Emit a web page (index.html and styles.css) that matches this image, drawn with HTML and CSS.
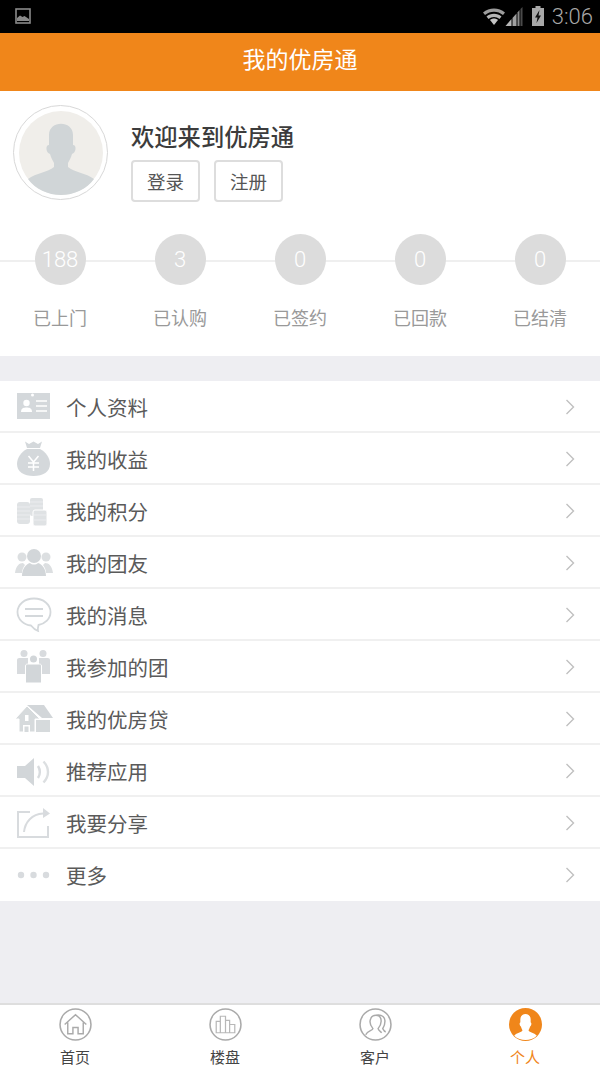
FILE: index.html
```html
<!DOCTYPE html>
<html lang="zh-CN">
<head>
    <meta charset="UTF-8">
    <meta name="viewport" content="width=device-width, initial-scale=1.0">
    <title>我的优房通</title>
    <link rel="stylesheet" href="styles.css">
</head>
<body>
    <div class="statusbar">
        <svg class="status-pic" width="16" height="16" viewBox="0 0 16 16">
            <rect x="1" y="1" width="14" height="14" fill="none" stroke="#8a8a8a" stroke-width="1.600"/>
            <path d="M2 13V10l3-2.500 2.500 1.500 2-1 4.500 3v2z" fill="#8a8a8a"/>
        </svg>
        <div class="status-right">
            <svg width="24" height="19" viewBox="0 0 23 19">
                <path d="M0.500 5.500C6.500 0 16.500 0 22.500 5.500L20.500 8C15.500 3.500 7.500 3.500 2.500 8z" fill="#9c9c9c"/>
                <path d="M4 9.500C8 5.800 15 5.800 19 9.500L17 12C14 9.300 9 9.300 6 12z" fill="#b5b5b5"/>
                <path d="M7.500 13C9.800 11 13.200 11 15.500 13L11.500 18z" fill="#c4c4c4"/>
            </svg>
            <svg class="status-signal" width="19" height="19" viewBox="0 0 18 19">
                <path d="M0 19L6 12V19z" fill="#b5b5b5"/>
                <path d="M7 11L11 6.500V19H7z" fill="#a0a0a0"/>
                <path d="M12 5.500L14 3V19H12z" fill="#8a8a8a"/>
                <path d="M15 2L17 0V19H15z" fill="#4a4a4a"/>
            </svg>
            <svg class="status-battery" width="14" height="20" viewBox="0 0 12 20">
                <path d="M3.500 0H8.500V2H12V20H0V2H3.500z" fill="#a8a8a8"/>
                <path d="M7.500 4L3 11.500H5.500L4.500 17 9 9.500H6.500z" fill="#111"/>
            </svg>
            <span class="status-time">3:06</span>
        </div>
    </div>

    <div class="titlebar">我的优房通</div>

    <div class="profile">
        <div class="avatar">
            <svg width="90" height="90" viewBox="0 0 90 90">
                <circle cx="45" cy="45" r="42" fill="#f0eeea"/>
                <path d="M33 27C33 12 57 12 57 27V37C61 37 60 45 56 46 55 50 53 53 52 55V59C58 64 70 65 78 71 71 81 58 87 45 87 32 87 19 81 12 71 20 65 32 64 38 59V55C37 53 35 50 34 46 30 45 29 37 33 37z" fill="#d0d5d7"/>
            </svg>
        </div>
        <div class="profile-body">
            <div class="welcome">欢迎来到优房通</div>
            <div class="profile-actions">
                <button>登录</button>
                <button>注册</button>
            </div>
        </div>
    </div>

    <div class="stats">
        <div class="stat"><div class="stat-num">188</div><div class="stat-label">已上门</div></div>
        <div class="stat"><div class="stat-num">3</div><div class="stat-label">已认购</div></div>
        <div class="stat"><div class="stat-num">0</div><div class="stat-label">已签约</div></div>
        <div class="stat"><div class="stat-num">0</div><div class="stat-label">已回款</div></div>
        <div class="stat"><div class="stat-num">0</div><div class="stat-label">已结清</div></div>
    </div>

    <div class="menu">
        <div class="row">
            <svg class="row-icon icon-card" width="36" height="36" viewBox="0 0 36 36">
                <rect x="1" y="5" width="33" height="26" fill="#d4d8db"/>
                <circle cx="16.500" cy="7" r="1.500" fill="#fff"/>
                <circle cx="10.500" cy="15" r="3.200" fill="#fff"/>
                <path d="M5 24C5 20 8 19.500 10.500 19.500S16 20 16 24z" fill="#fff"/>
                <path d="M20 13H31M20 18H31M20 23H31" stroke="#fff" stroke-width="1.500"/>
            </svg>
            <span class="row-text">个人资料</span>
            <svg class="chevron" width="10" height="16" viewBox="0 0 10 16"><path d="M1.500 1L8.500 8 1.500 15" fill="none" stroke="#c0c0c0" stroke-width="1.400"/></svg>
        </div>
        <div class="row">
            <svg class="row-icon" width="36" height="36" viewBox="0 0 36 36">
                <path d="M9 0.500L13 3 17.500 0.500 22 3 26 0.500 24 7H11z" fill="#d4d8db"/>
                <path d="M11 8H24C30 11 34 17 34 23 34 31 27 35 17.500 35S1 31 1 23C1 17 5 11 11 8z" fill="#d4d8db"/>
                <path d="M12.500 15L17.500 21 22.500 15M17.500 21V30M12 22H23M12 26H23" fill="none" stroke="#fff" stroke-width="1.500"/>
            </svg>
            <span class="row-text">我的收益</span>
            <svg class="chevron" width="10" height="16" viewBox="0 0 10 16"><path d="M1.500 1L8.500 8 1.500 15" fill="none" stroke="#c0c0c0" stroke-width="1.400"/></svg>
        </div>
        <div class="row">
            <svg class="row-icon icon-coins" width="36" height="36" viewBox="0 0 36 36">
                <rect x="1" y="7" width="13" height="22" rx="3" fill="#dfe2e4"/>
                <rect x="14" y="3" width="13" height="18" rx="2" fill="#dfe2e4"/>
                <rect x="17" y="15" width="14" height="16" rx="2" fill="#dfe2e4" stroke="#fff" stroke-width="1"/>
                <path d="M1 12H14M1 16H14M1 20H14M1 24H14M14 7H27M14 11H27M17 20H31M17 25H31" stroke="#eef0f1" stroke-width="0.800"/>
            </svg>
            <span class="row-text">我的积分</span>
            <svg class="chevron" width="10" height="16" viewBox="0 0 10 16"><path d="M1.500 1L8.500 8 1.500 15" fill="none" stroke="#c0c0c0" stroke-width="1.400"/></svg>
        </div>
        <div class="row">
            <svg class="row-icon" width="38" height="30" viewBox="0 0 38 30">
                <circle cx="7" cy="9" r="4.500" fill="#dcdfe1"/>
                <circle cx="31" cy="9" r="4.500" fill="#dcdfe1"/>
                <path d="M0 25C1 18 4 15 8 15L10 17C8 20 7 22 7 25z" fill="#dcdfe1"/>
                <path d="M38 25C37 18 34 15 30 15L28 17C30 20 31 22 31 25z" fill="#dcdfe1"/>
                <circle cx="19" cy="8" r="7" fill="#d2d6d9"/>
                <path d="M7 28C7 21 11 16 15 15 17 17 21 17 23 15 27 16 31 21 31 28z" fill="#d2d6d9"/>
            </svg>
            <span class="row-text">我的团友</span>
            <svg class="chevron" width="10" height="16" viewBox="0 0 10 16"><path d="M1.500 1L8.500 8 1.500 15" fill="none" stroke="#c0c0c0" stroke-width="1.400"/></svg>
        </div>
        <div class="row">
            <svg class="row-icon" width="36" height="36" viewBox="0 0 36 36">
                <path d="M18 1.500C8.500 1.500 1.500 7.500 1.500 15S8 28 15 28.500C17 31 19 33 22 34 21.500 32 22 30 22.500 28C29 26.500 34.500 22 34.500 15 34.500 7.500 27.500 1.500 18 1.500z" fill="none" stroke="#d4d8db" stroke-width="1.800"/>
                <path d="M9 12H27M9 19H27" stroke="#d4d8db" stroke-width="1.800"/>
            </svg>
            <span class="row-text">我的消息</span>
            <svg class="chevron" width="10" height="16" viewBox="0 0 10 16"><path d="M1.500 1L8.500 8 1.500 15" fill="none" stroke="#c0c0c0" stroke-width="1.400"/></svg>
        </div>
        <div class="row">
            <svg class="row-icon" width="36" height="36" viewBox="0 0 36 36">
                <circle cx="8" cy="4.500" r="3.500" fill="#d8dbde"/>
                <circle cx="27" cy="4.500" r="3.500" fill="#d8dbde"/>
                <path d="M1 11C1 9 3 9 5 9H12V25H1zM23 9H30C32 9 34 9 34 11V25H23z" fill="#d8dbde"/>
                <circle cx="17.500" cy="10" r="3.500" fill="#d2d6d9"/>
                <path d="M9.500 17C9.500 15 11 15 13 15H22C24 15 25.500 15 25.500 17V34H9.500z" fill="#d2d6d9" stroke="#fff" stroke-width="1"/>
            </svg>
            <span class="row-text">我参加的团</span>
            <svg class="chevron" width="10" height="16" viewBox="0 0 10 16"><path d="M1.500 1L8.500 8 1.500 15" fill="none" stroke="#c0c0c0" stroke-width="1.400"/></svg>
        </div>
        <div class="row">
            <svg class="row-icon" width="38" height="28" viewBox="0 0 38 28">
                <path d="M12 0H29L38 13H27z" fill="#d2d6d9"/>
                <path d="M21 15H35V27H21z" fill="#d6dadc"/>
                <path d="M0 14L12 1 25 14H20V27H4V14z" fill="#d6dadc" stroke="#fff" stroke-width="1"/>
                <rect x="8" y="20" width="7" height="7" fill="#fff"/>
                <rect x="9.500" y="21.500" width="4" height="5.500" fill="#d6dadc"/>
                <rect x="10" y="10" width="3.500" height="6" fill="#fff"/>
            </svg>
            <span class="row-text">我的优房贷</span>
            <svg class="chevron" width="10" height="16" viewBox="0 0 10 16"><path d="M1.500 1L8.500 8 1.500 15" fill="none" stroke="#c0c0c0" stroke-width="1.400"/></svg>
        </div>
        <div class="row">
            <svg class="row-icon icon-speaker" width="36" height="30" viewBox="0 0 36 30">
                <path d="M1 9H9L18 1V29L9 21H1z" fill="#d2d6d9"/>
                <path d="M22 9C24.500 13 24.500 17 22 21" fill="none" stroke="#d8dbde" stroke-width="2.400"/>
                <path d="M27.500 4.500C33.500 11 33.500 19 27.500 25.500" fill="none" stroke="#dcdfe1" stroke-width="2.400"/>
            </svg>
            <span class="row-text">推荐应用</span>
            <svg class="chevron" width="10" height="16" viewBox="0 0 10 16"><path d="M1.500 1L8.500 8 1.500 15" fill="none" stroke="#c0c0c0" stroke-width="1.400"/></svg>
        </div>
        <div class="row">
            <svg class="row-icon" width="36" height="32" viewBox="0 0 36 32">
                <path d="M14 5H2V30H32V19" fill="none" stroke="#d8dbde" stroke-width="2"/>
                <path d="M8 25C9 15 16 7 27 6.500" fill="none" stroke="#d8dbde" stroke-width="2"/>
                <path d="M27 1L34 6.500 27 11z" fill="#d8dbde"/>
            </svg>
            <span class="row-text">我要分享</span>
            <svg class="chevron" width="10" height="16" viewBox="0 0 10 16"><path d="M1.500 1L8.500 8 1.500 15" fill="none" stroke="#c0c0c0" stroke-width="1.400"/></svg>
        </div>
        <div class="row">
            <svg class="row-icon" width="36" height="12" viewBox="0 0 36 12">
                <circle cx="5" cy="6" r="3.200" fill="#d8dbde"/>
                <circle cx="17.500" cy="6" r="3.200" fill="#d8dbde"/>
                <circle cx="30" cy="6" r="3.200" fill="#d8dbde"/>
            </svg>
            <span class="row-text">更多</span>
            <svg class="chevron" width="10" height="16" viewBox="0 0 10 16"><path d="M1.500 1L8.500 8 1.500 15" fill="none" stroke="#c0c0c0" stroke-width="1.400"/></svg>
        </div>
    </div>

    <div class="spacer"></div>

    <div class="tabbar">
        <div class="tab">
            <svg width="33" height="33" viewBox="0 0 32 32">
                <circle cx="16" cy="16" r="15" fill="#fff" stroke="#aaa" stroke-width="1.500"/>
                <path d="M5.500 16L16 6.500 26.500 16M8.500 14V25H13.500V19H18.500V25H23.500V14" fill="none" stroke="#aaa" stroke-width="1.400"/>
            </svg>
            <span>首页</span>
        </div>
        <div class="tab">
            <svg width="33" height="33" viewBox="0 0 32 32">
                <circle cx="16" cy="16" r="15" fill="#fff" stroke="#aaa" stroke-width="1.500"/>
                <path d="M7 24V13H11V24zM11 24V8H16V24zM16 24V12H20V24zM20 24V16H25V24z" fill="none" stroke="#b8b8b8" stroke-width="1.200"/>
            </svg>
            <span>楼盘</span>
        </div>
        <div class="tab">
            <svg width="33" height="33" viewBox="0 0 32 32">
                <circle cx="16" cy="16" r="15" fill="#fff" stroke="#aaa" stroke-width="1.500"/>
                <path d="M6.500 26C8 22 13 22 13.500 20 11 17 10 13 11.500 10 13 6 20 6 21 10 22 13 21 17 18.500 20 19 22 21 23 22 24M17 7C22 6 26 9 25 14 25 17 24 18 23 20 24 22 25 23 26 23" fill="none" stroke="#aaa" stroke-width="1.400"/>
            </svg>
            <span>客户</span>
        </div>
        <div class="tab tab-active">
            <svg width="33" height="33" viewBox="0 0 32 32">
                <circle cx="16" cy="16" r="16" fill="#f0861a"/>
                <path d="M11 11C11 4 21 4 21 11V14C22 14 22 17 20.500 18 20 20 19 21 19 22 21 24 25 24 27 27 24 30 20 31 16 31S8 30 5 27C7 24 11 24 13 22 13 21 12 20 11.500 18 10 17 10 14 11 14z" fill="#fff"/>
            </svg>
            <span>个人</span>
        </div>
    </div>
</body>
</html>
```

FILE: styles.css
```css
* {
    box-sizing: border-box;
}
body {
    margin: 0;
    height: 1067px;
    display: flex;
    flex-direction: column;
    overflow: hidden;
    background: #eeeef2;
    font-family: "Noto Sans CJK SC", "Noto Sans", sans-serif;
}
.statusbar {
    height: 33px;
    flex: none;
    background: #000;
    display: flex;
    align-items: center;
    justify-content: space-between;
    padding: 0 7px 1px 15px;
}
.status-right {
    display: flex;
    align-items: center;
}
.status-signal {
    margin-left: -1px;
}
.status-battery {
    margin-left: 7px;
}
.status-time {
    margin-left: 7px;
    font-family: Roboto, sans-serif;
    font-size: 22px;
    font-weight: 300;
    color: #a8a8a8;
}
.titlebar {
    height: 58px;
    flex: none;
    background: #f0861a;
    color: #fff;
    font-size: 23px;
    line-height: 50px;
    text-align: center;
}
.profile {
    height: 126px;
    flex: none;
    background: #fff;
    display: flex;
    padding: 14px 0 0 13px;
}
.avatar {
    width: 95px;
    height: 95px;
    border-radius: 50%;
    border: 1.500px solid #d8d8d8;
    display: flex;
    align-items: center;
    justify-content: center;
    background: #fff;
}
.profile-body {
    margin-left: 23px;
}
.welcome {
    margin-top: 13px;
    font-size: 23.300px;
    line-height: 36px;
    font-weight: 500;
    color: #3c3c3c;
}
.profile-actions {
    display: flex;
    gap: 14px;
    margin-top: 6px;
}
.profile-actions button {
    width: 69px;
    height: 42px;
    padding: 0;
    background: #fff;
    border: 2px solid #dddddd;
    border-radius: 4px;
    font-family: inherit;
    font-size: 18.500px;
    color: #555;
}
.stats {
    position: relative;
    height: 139px;
    flex: none;
    background: #fff;
    display: grid;
    grid-template-columns: repeat(5, 1fr);
    padding-top: 17px;
}
.stats::before {
    content: "";
    position: absolute;
    left: 0;
    right: 0;
    top: 43px;
    height: 2px;
    background: #efefef;
}
.stat {
    position: relative;
    display: flex;
    flex-direction: column;
    align-items: center;
}
.stat-num {
    width: 51px;
    height: 51px;
    border-radius: 50%;
    background: #dcdcdc;
    color: #fff;
    font-family: Roboto, sans-serif;
    font-weight: 300;
    font-size: 22px;
    line-height: 52px;
    text-align: center;
}
.stat-label {
    margin-top: 17px;
    font-size: 18px;
    line-height: 30px;
    color: #999;
}
.menu {
    flex: none;
    margin-top: 25px;
    background: #fff;
}
.row {
    position: relative;
    height: 52px;
    display: flex;
    align-items: center;
    padding-top: 2px;
    border-bottom: 2px solid #f0f0f0;
}
.row:last-child {
    border-bottom-color: #fff;
}
.row-icon {
    position: absolute;
    left: 34px;
    top: 26px;
    transform: translate(-50%, -50%);
}
.icon-card {
    top: 25px;
}
.icon-coins {
    top: 28px;
}
.icon-speaker {
    top: 27px;
}
.row-text {
    margin-left: 66px;
    font-size: 20.500px;
    color: #5a5a5a;
}
.chevron {
    margin-left: auto;
    margin-right: 25px;
}
.spacer {
    flex: 1;
}
.tabbar {
    height: 64px;
    flex: none;
    background: #fff;
    border-top: 2px solid #dedede;
    display: grid;
    grid-template-columns: repeat(4, 1fr);
}
.tab {
    display: flex;
    flex-direction: column;
    align-items: center;
    padding-top: 3px;
    font-size: 15px;
    line-height: 20px;
    color: #444;
}
.tab span {
    margin-top: 6px;
}
.tab-active {
    color: #f0861a;
}
```
